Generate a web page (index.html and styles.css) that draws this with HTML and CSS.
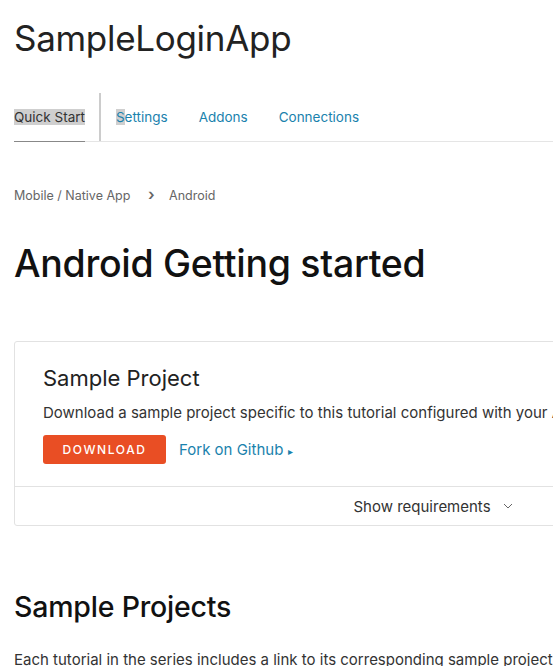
FILE: index.html
```html
<!DOCTYPE html>
<html lang="en">
<head>
    <meta charset="UTF-8">
    <title>SampleLoginApp - Android</title>
    <link rel="stylesheet" href="styles.css">
</head>
<body>

<div class="page">
    <h1 class="app-title">SampleLoginApp</h1>

    <nav class="tabs">
        <a class="tab active"><span class="hl">Quick Start</span></a>
        <span class="tab-divider"></span>
        <a class="tab"><span class="hl">S</span>ettings</a>
        <a class="tab">Addons</a>
        <a class="tab">Connections</a>
    </nav>

    <div class="breadcrumb">
        <span>Mobile / Native App</span>
        <span class="crumb-sep">&#8250;</span>
        <span>Android</span>
    </div>

    <h1 class="page-title">Android Getting started</h1>

    <div class="card">
        <div class="card-body">
            <h2>Sample Project</h2>
            <p>Download a sample project specific to this tutorial configured with your Auth0 credentials.</p>
            <div class="actions">
                <button class="btn-download">DOWNLOAD</button>
                <a class="fork">Fork on Github <span class="caret">&#9656;</span></a>
            </div>
        </div>
        <div class="card-footer">
            <span>Show requirements</span>
            <svg class="chev" width="10" height="6" viewBox="0 0 10 6"><path d="M1 1l4 4 4-4" fill="none" stroke="#666" stroke-width="1"/></svg>
        </div>
    </div>

    <h2 class="section-title">Sample Projects</h2>
    <p class="section-text">Each tutorial in the series includes a link to its corresponding sample project, which demonstrates how to implement the feature.</p>
</div>

</body>
</html>
```

FILE: styles.css
```css
html, body {
    overflow: hidden;
}
body {
    margin: 0;
    font-family: Inter, "Noto Sans", sans-serif;
    color: #222;
    background: #fff;
}
.page {
    width: 880px;
    padding: 0 14px;
}
.app-title {
    font-size: 35px;
    font-weight: 400;
    margin: 0;
    padding-top: 18px;
    line-height: 40px;
    letter-spacing: -0.3px;
}
.tabs {
    display: flex;
    align-items: stretch;
    margin-top: 35px;
    height: 48px;
    border-bottom: 1px solid #e5e5e5;
    width: 539px;
}
.tab {
    font-size: 13.5px;
    color: #1a82ad;
    display: flex;
    align-items: center;
    margin-right: 31px;
}
.tab.active {
    color: #333;
    border-bottom: 1px solid #888;
    margin-bottom: -1px;
    margin-right: 14px;
}
.hl {
    background: #cfcfcf;
}
.tab-divider {
    width: 2px;
    background: #ccc;
    margin-right: 15px;
}
.breadcrumb {
    margin-top: 42px;
    font-size: 12.5px;
    color: #666;
}
.crumb-sep {
    margin: 0 11px 0 14px;
    font-size: 16px;
    font-weight: 600;
}
.page-title {
    font-size: 37.5px;
    font-weight: 500;
    margin: 37px 0 0;
    letter-spacing: -0.3px;
    color: #111;
}
.card {
    margin-top: 55px;
    border: 1px solid #e2e2e2;
    border-radius: 3px;
    width: 830px;
}
.card-body {
    padding: 23px 28px 22px;
}
.card-body h2 {
    font-size: 22px;
    font-weight: 400;
    margin: 0;
    color: #222;
}
.card-body p {
    font-size: 15px;
    margin: 12px 0 13px;
    color: #333;
}
.actions {
    display: flex;
    align-items: center;
    gap: 13px;
}
.btn-download {
    background: #e94e24;
    color: #fff;
    border: none;
    border-radius: 3px;
    font-family: inherit;
    font-size: 12px;
    font-weight: 500;
    letter-spacing: 1.6px;
    width: 123px;
    height: 29px;
}
.fork {
    font-size: 15px;
    color: #1a82ad;
}
.caret {
    font-size: 10px;
}
.card-footer {
    border-top: 1px solid #e2e2e2;
    height: 38px;
    display: flex;
    align-items: center;
    justify-content: center;
    gap: 12px;
    padding-left: 6px;
    font-size: 15px;
    color: #333;
}
.section-title {
    font-size: 28.5px;
    font-weight: 500;
    margin: 63px 0 0;
    letter-spacing: -0.2px;
    color: #111;
}
.section-text {
    margin: 26px 0 0;
    font-size: 15px;
    color: #333;
}
```
